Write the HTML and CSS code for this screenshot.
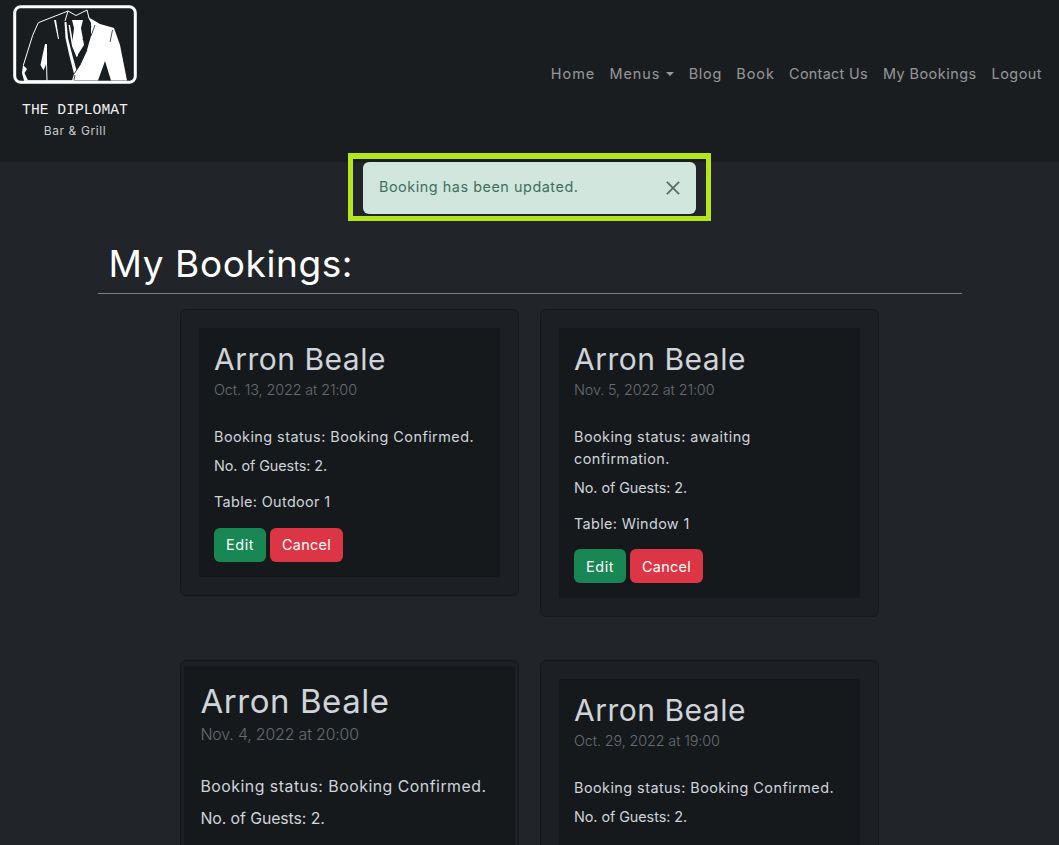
FILE: index.html
```html
<!DOCTYPE html>
<html lang="en">
<head>
<meta charset="utf-8">
<title>My Bookings - The Diplomat</title>
<link rel="stylesheet" href="styles.css">
</head>
<body>
<header class="navbar">
  <a class="brand" href="#">
    <svg class="logo" viewBox="13 5 124 80" aria-hidden="true">
      <rect x="14.7" y="6.8" width="120.6" height="75.4" rx="6" fill="none" stroke="#fff" stroke-width="3"/>
      <path fill="#fff" d="M88 17 L100 24 L114 28 L120 45 L127 80.5 L111 80.5 L105 61 L98 80.5 L72 80.5 L74 74 L80 65 L87 50 L91 36 L91 23 Z"/>
      <path fill="#fff" d="M72 20 L83 20 L81 28 L84 45 L77 56 L72 45 L74 28 Z"/>
      <path fill="#fff" d="M45 44 L47 44 L47 62 L43.5 70.5 L40.5 65 Z"/>
      <path fill="#fff" d="M23 65 L27 69 L24.5 73 L28 80.5 L24 80.5 L22 73 Z"/>
      <path fill="#fff" d="M54 20 L56 20 L59 39 L58 39 Z"/>
      <path fill="#fff" d="M64.5 22 L66.5 22 L68 38 L72 54 L77 72 L74.5 76 L69 54 L65.5 38 Z"/>
      <path fill="#fff" d="M68.5 25 L70 25 L73.5 45 L78 56 L76.5 57 L72 46 Z"/>
      <path fill="none" stroke="#fff" stroke-width="1" d="M68 11 L38.300 22.700 L32.700 35.300 L23.300 65.300 M24 80.700 L74 80.700 M46 44 L47 80.700 M68 11 L76 15.500 L87 10 L89 18 M68 11 L65 21"/>
      <path fill="none" stroke="#1a1d20" stroke-width=".8" d="M83 40 L87 24 M87 42 L91 26 M91 36 L95 25 M110 42 L112.500 30 M74 74 L80 65 L87 50 M74 80 L75 75"/>
    </svg>
    <span class="brand-name">THE DIPLOMAT</span>
    <span class="brand-sub">Bar &amp; Grill</span>
  </a>
  <nav class="nav">
    <a href="#" class="nav-wide">Home</a>
    <a href="#" class="nav-wide dropdown">Menus</a>
    <a href="#" class="nav-mid">Blog</a>
    <a href="#" class="nav-wide">Book</a>
    <a href="#" class="nav-tight">Contact Us</a>
    <a href="#">My Bookings</a>
    <a href="#">Logout</a>
  </nav>
</header>

<div class="message-box">
  <div class="alert">
    <span>Booking has been updated.</span>
    <svg class="close" viewBox="0 0 16 16" aria-hidden="true"><path d="M1 1 L15 15 M15 1 L1 15"/></svg>
  </div>
</div>

<main class="container">
  <h1>My Bookings:</h1>
  <hr class="rule">
  <div class="bookings">
    <article class="card">
      <div class="card-body">
        <h2>Arron Beale</h2>
        <p class="date">Oct. 13, 2022 at 21:00</p>
        <p class="status">Booking status: Booking Confirmed.</p>
        <p class="guests">No. of Guests: 2.</p>
        <p class="table">Table: Outdoor 1</p>
        <div class="actions"><a class="btn edit" href="#">Edit</a><a class="btn cancel" href="#">Cancel</a></div>
      </div>
    </article>
    <article class="card">
      <div class="card-body">
        <h2>Arron Beale</h2>
        <p class="date">Nov. 5, 2022 at 21:00</p>
        <p class="status">Booking status: awaiting confirmation.</p>
        <p class="guests">No. of Guests: 2.</p>
        <p class="table">Table: Window 1</p>
        <div class="actions"><a class="btn edit" href="#">Edit</a><a class="btn cancel" href="#">Cancel</a></div>
      </div>
    </article>
    <article class="card">
      <div class="card-body hovered">
        <h2>Arron Beale</h2>
        <p class="date">Nov. 4, 2022 at 20:00</p>
        <p class="status">Booking status: Booking Confirmed.</p>
        <p class="guests">No. of Guests: 2.</p>
        <p class="table">Table: Outdoor 2</p>
        <div class="actions"><a class="btn edit" href="#">Edit</a><a class="btn cancel" href="#">Cancel</a></div>
      </div>
    </article>
    <article class="card">
      <div class="card-body">
        <h2>Arron Beale</h2>
        <p class="date">Oct. 29, 2022 at 19:00</p>
        <p class="status">Booking status: Booking Confirmed.</p>
        <p class="guests">No. of Guests: 2.</p>
        <p class="table">Table: Window 2</p>
        <div class="actions"><a class="btn edit" href="#">Edit</a><a class="btn cancel" href="#">Cancel</a></div>
      </div>
    </article>
  </div>
</main>
</body>
</html>
```
FILE: styles.css
```css
* { box-sizing: border-box; }
html, body { margin: 0; }
body {
  background: #212529;
  color: #dee2e6;
  font-family: Inter, "Noto Sans", "Liberation Sans", sans-serif;
  font-size: 14.4px;
  line-height: 1.5;
}
a { text-decoration: none; color: inherit; }
.navbar {
  height: 162px;
  background: #1a1d20;
  display: flex;
  justify-content: space-between;
  align-items: flex-start;
  padding: 5px 17px 0 13px;
}
.brand { display: flex; flex-direction: column; align-items: center; width: 124px; color: #f0f0f0; }
.logo { width: 124px; height: 80px; display: block; }
.brand-name { font-family: "Liberation Mono", monospace; font-size: 14.7px; line-height: 18px; margin-top: 16px; white-space: nowrap; }
.brand-sub { font-size: 12px; line-height: 18px; margin-top: 3px; color: #c9c9c9; letter-spacing: .6px; }
.nav { display: flex; gap: 15px; margin-top: 58px; color: rgba(255,255,255,.55); font-size: 14.4px; letter-spacing: .5px; line-height: 22px; }
.nav-wide { letter-spacing: 1px; margin-right: -.75px; }
.nav-mid { letter-spacing: .75px; margin-right: -.75px; }
.nav-tight { letter-spacing: .3px; }
.dropdown::after {
  content: "";
  display: inline-block;
  margin-left: 6px;
  vertical-align: 3px;
  border-top: 4.5px solid;
  border-left: 4.5px solid transparent;
  border-right: 4.5px solid transparent;
}
.message-box {
  width: 363px;
  margin: -9px auto 0;
  border: 5px solid #b5e61d;
  border-top-width: 6px;
  padding: 3px 10px 2px;
}
.alert {
  height: 52px;
  background: #d1e7dd;
  color: #3f6f60;
  border-radius: 6px;
  padding: 0 16px;
  display: flex;
  align-items: center;
  justify-content: space-between;
  letter-spacing: .54px;
}
.alert span { margin-top: -2px; }
.close { width: 14px; height: 14px; fill: none; stroke: #000; stroke-width: 2; opacity: .55; }
.container { width: 864px; margin: 0 auto; }
h1 { font-size: 37px; font-weight: 400; line-height: 44px; letter-spacing: .6px; color: #fff; margin: 21px 0 0; padding-left: 11px; }
.rule { border: 0; border-top: 1px solid #7b7f83; margin: 7px 0 15px; }
.bookings { display: grid; grid-template-columns: 339px 339px; gap: 42.4px 21px; justify-content: center; align-items: start; }
.card { background: #1c1f23; border: 1px solid #16181b; border-radius: 6px; padding: 18px; }
.card-body { background: #16191c; padding: 16px 15px 15px; color: #ced4da; }
.hovered { transform: scale(1.1); }
h2 { font-size: 30px; font-weight: 400; line-height: 30px; letter-spacing: .5px; color: #ced4da; margin: 0; }
.date { color: #666c72; margin: 5px 0 0; font-size: 14.4px; font-weight: 300; line-height: 21.6px; letter-spacing: -.12px; }
.status { margin: 25.8px 0 0; line-height: 21.6px; letter-spacing: .46px; }
.guests { margin: 7.4px 0 0; line-height: 21.6px; letter-spacing: -.07px; }
.table { margin: 14.2px 0 0; line-height: 21.6px; letter-spacing: .36px; }
.actions { display: flex; gap: 4px; margin-top: 15px; }
.btn { height: 34px; border-radius: 6px; color: #fff; display: flex; align-items: center; justify-content: center; }
.edit { width: 52px; background: #198754; letter-spacing: .6px; }
.cancel { width: 73px; background: #dc3545; letter-spacing: .3px; }
```
